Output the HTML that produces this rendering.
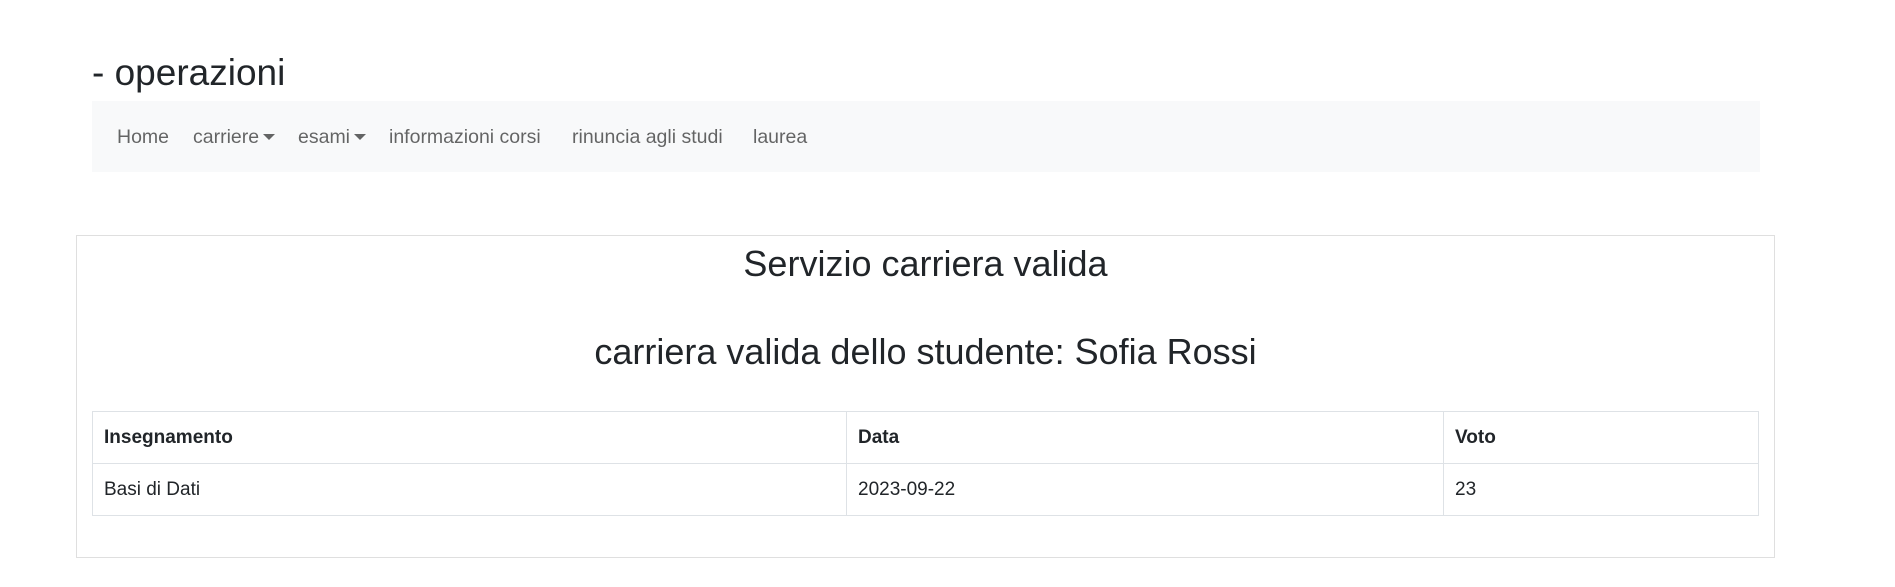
<!DOCTYPE html>
<html><head><meta charset="utf-8"><style>
body{margin:0;width:1895px;height:587px;background:#fff;font-family:"Liberation Sans",sans-serif;color:#212529;position:relative;overflow:hidden}
.a{position:absolute;white-space:nowrap}
.nav{left:92px;top:101px;width:1668px;height:71px;background:#f8f9fa}
.ni{color:rgba(0,0,0,.6);font-size:19.5px;top:126px}
.caret{display:inline-block;border-top:6px solid rgba(0,0,0,.6);border-left:6px solid transparent;border-right:6px solid transparent;margin-left:4px;vertical-align:3px}
.card{left:76px;top:235px;width:1697px;height:321px;border:1px solid #dfdfdf}
.h{left:76px;width:1699px;text-align:center;font-size:36px}
table{position:absolute;left:92px;top:411px;width:1667px;border-collapse:collapse;font-size:19px}
td,th{border:1px solid #dee2e6;height:51px;padding:0 11px;text-align:left}
</style></head><body>
<div class="a" style="left:92px;top:52px;font-size:37px">- operazioni</div>
<div class="a nav"></div>
<div class="a ni" style="left:117px">Home</div>
<div class="a ni" style="left:193px">carriere<span class="caret"></span></div>
<div class="a ni" style="left:298px">esami<span class="caret"></span></div>
<div class="a ni" style="left:389px">informazioni corsi</div>
<div class="a ni" style="left:572px">rinuncia agli studi</div>
<div class="a ni" style="left:753px">laurea</div>
<div class="a card"></div>
<div class="a h" style="top:243px">Servizio carriera valida</div>
<div class="a h" style="top:331px">carriera valida dello studente: Sofia Rossi</div>
<table><tr><th style="width:731px">Insegnamento</th><th style="width:574px">Data</th><th>Voto</th></tr>
<tr><td>Basi di Dati</td><td>2023-09-22</td><td>23</td></tr></table>
</body></html>
